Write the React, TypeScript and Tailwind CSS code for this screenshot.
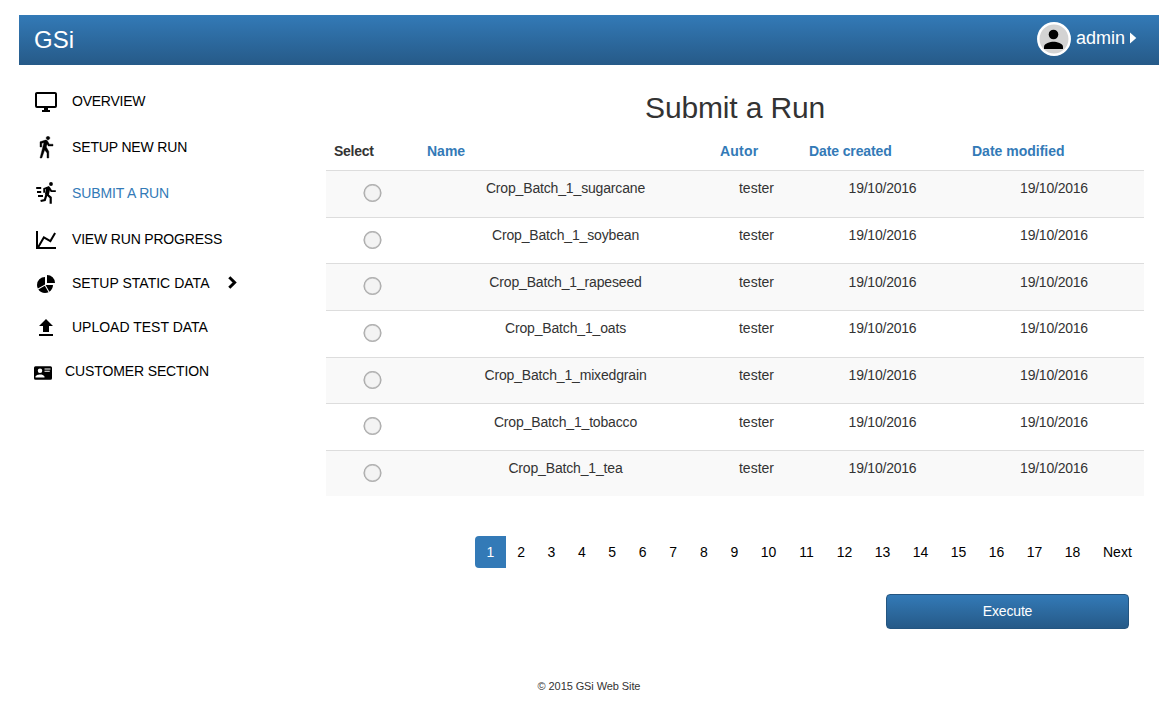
import type { ReactNode } from "react";

const menu: { label: string; icon: ReactNode; row: string; text: string; arrow?: boolean; card?: boolean }[] = [
  { label: "OVERVIEW", row: "h-[46px]", text: "tracking-[-0.25px]", icon: <path d="M21,16H3V4H21M21,2H3C1.89,2 1,2.89 1,4V16A2,2 0 0,0 3,18H10V20H8V22H16V20H14V18H21A2,2 0 0,0 23,16V4C23,2.89 22.1,2 21,2Z" /> },
  { label: "SETUP NEW RUN", row: "h-[46px]", text: "tracking-[-0.15px]", icon: <path stroke="currentColor" strokeWidth="0.4" d="M14.12,10H19V8.2H15.38L13.38,4.87C13.08,4.37 12.54,4.03 11.92,4.03C11.74,4.03 11.58,4.06 11.42,4.11L6,5.8V11H7.8V7.33L9.91,6.67L6,22H7.8L10.67,13.89L13,17V22H14.8V15.59L12.31,11.05L13.04,8.18M14,3.8C15,3.8 15.8,3 15.8,2C15.8,1 15,0.2 14,0.2C13,0.2 12.2,1 12.2,2C12.2,3 13,3.8 14,3.8Z" /> },
  {
    label: "SUBMIT A RUN", row: "h-[46px]", text: "tracking-[-0.12px] text-[#337ab7]",
    icon: (
      <g fill="none" stroke="currentColor" strokeWidth="1.9">
        <circle cx="17" cy="2" r="1.9" fill="currentColor" stroke="none" />
        <path d="M2.2 6H7.2M3 10H7.2M4 14H9" />
        <path d="M10.2 10.8V6.8L14.6 5.1L17.3 9.1H21.8" />
        <path d="M14.4 5.4L12.8 13" strokeWidth="4" />
        <path d="M12.6 12L16.7 15.6V21.8M12.5 12.5L10.8 18L6.6 19" strokeWidth="2.2" />
      </g>
    ),
  },
  { label: "VIEW RUN PROGRESS", row: "h-[44px]", text: "tracking-[-0.18px]", icon: <path d="M16,11.78L20.24,4.45L21.97,5.45L16.74,14.5L10.23,10.75L5.46,19H22V21H2V3H4V17.54L9.5,8L16,11.78Z" /> },
  { label: "SETUP STATIC DATA", row: "h-[44px]", text: "tracking-[0.02px]", arrow: true, icon: <path d="M21,11H13V3A8,8 0 0,1 21,11M19,13C19,15.78 17.58,18.23 15.43,19.67L11.58,13H19M11,21C8.22,21 5.77,19.58 4.33,17.43L10.82,13.68L14.56,20.17C13.5,20.7 12.28,21 11,21M3,13A8,8 0 0,1 11,5V12.42L3.83,16.56C3.3,15.5 3,14.28 3,13Z" /> },
  { label: "UPLOAD TEST DATA", row: "h-[44px]", text: "tracking-normal", icon: <path d="M9,16V10H5L12,3L19,10H15V16H9M5,20V18H19V20H5Z" /> },
  { label: "CUSTOMER SECTION", row: "h-[44px]", text: "tracking-[-0.12px]", card: true, icon: <path fillRule="evenodd" d="M2,3H22A2,2 0 0,1 24,5V19A2,2 0 0,1 22,21H2A2,2 0 0,1 0,19V5A2,2 0 0,1 2,3M14,6V7.3H22V6H14M14,9V10.3H21V9H14M8,13.9C6,13.9 2,15 2,17V18H14V17C14,15 10,13.9 8,13.9M8,6A3,3 0 0,0 5,9A3,3 0 0,0 8,12A3,3 0 0,0 11,9A3,3 0 0,0 8,6Z" /> },
];

const crops = [
  { name: "sugarcane", row: "h-[47px]", pad: "pt-[7px]" },
  { name: "soybean", row: "h-[46px]", pad: "pt-[7px]" },
  { name: "rapeseed", row: "h-[47px]", pad: "pt-[8px]" },
  { name: "oats", row: "h-[47px]", pad: "pt-[7px]" },
  { name: "mixedgrain", row: "h-[46px]", pad: "pt-[7px]" },
  { name: "tobacco", row: "h-[47px]", pad: "pt-[8px]" },
  { name: "tea", row: "h-[46px]", pad: "pt-[7px]" },
];
const pages = Array.from({ length: 17 }, (_, i) => i + 2);

function pageClass(p: number) {
  if (p < 8) return "w-[30.4px] pt-[6px] text-center";
  if (p < 10) return "w-[30.4px] pl-px pt-[6px] text-center";
  return "w-[38px] pl-px pt-[6px] text-center";
}

export default function App() {
  return (
    <div className="h-[701px] w-[1169px] overflow-hidden bg-white pl-[19px] pr-[10px] pt-[15px] font-['Liberation_Sans',Arial,sans-serif] text-sm leading-5 text-[#333]">
      <header className="flex h-[50px] items-start justify-between bg-linear-to-b from-[#337ab7] to-[#265a88] pl-[15px] pr-[22px] text-white">
        <span className="pt-[11px] text-[24px] leading-7">GSi</span>
        <div className="flex items-start pt-[7px]">
          <svg className="mr-[5px] size-[34px]" viewBox="0 0 34 34">
            <circle cx="17" cy="17" r="15.7" fill="#d3d3d3" stroke="#fff" strokeWidth="2.5" />
            <circle cx="16.5" cy="12.5" r="4.8" fill="#000" />
            <path d="M7 27v-2.2c0-3.3 6.3-5 9.5-5s9.5 1.7 9.5 5V27z" fill="#000" />
          </svg>
          <span className="pt-[5px] text-[18px] leading-[22px]">admin</span>
          <svg className="ml-[5px] mt-[10px] h-[12px] w-[7px]" viewBox="0 0 7 12"><path d="M0 0.5l6.3 5.5L0 11.5z" fill="#fff" /></svg>
        </div>
      </header>
      <div className="flex h-[592px]">
        <nav className="w-[307px] pl-[15px] pt-[25px] text-black">
          {menu.map((m) => (
            <div key={m.label} className={`flex items-start ${m.row}`}>
              <svg className={m.card ? "mr-[13px] mt-[4px] size-[18px]" : "mr-[14px] size-6"} viewBox="0 0 24 24" fill="currentColor">{m.icon}</svg>
              <span className={`pt-px ${m.text}`}>{m.label}</span>
              {m.arrow && <svg className="ml-[18px] mt-[4px] h-[13px] w-[9px]" viewBox="0 0 9 13"><path d="M1.3 1.3l5.3 5.2-5.3 5.2" fill="none" stroke="#000" strokeWidth="3" /></svg>}
            </div>
          ))}
        </nav>
        <main className="w-[818px]">
          <h1 className="pt-[26px] text-center text-[30px] leading-[33px] tracking-[-0.15px]">Submit a Run</h1>
          <table className="mt-[7px] w-full table-fixed border-separate border-spacing-0">
            <colgroup><col className="w-[93px]" /><col className="w-[293px]" /><col className="w-[89px]" /><col className="w-[163px]" /><col className="w-[180px]" /></colgroup>
            <thead>
              <tr className="h-[39px] text-left text-[#337ab7]">
                <th className="px-2 pt-px tracking-[-0.25px] text-[#333]">Select</th>
                <th className="px-2 pt-px">Name</th>
                <th className="px-2 pt-px tracking-[0.2px]">Autor</th>
                <th className="px-2 pt-px tracking-[-0.12px]">Date created</th>
                <th className="px-2 pt-px">Date modified</th>
              </tr>
            </thead>
            <tbody>
              {crops.map((c) => (
                <tr key={c.name} className={`text-center align-top odd:bg-[#f9f9f9] ${c.row}`}>
                  <td className="border-t border-[#ddd] pt-[13px]">
                    <svg className="mx-auto size-[19px]" viewBox="0 0 19 19">
                      <circle cx="9.5" cy="9" r="8.2" fill="#f3f3f3" stroke="#ccc" strokeWidth="1.8" />
                      <circle cx="9.5" cy="9" r="8.4" fill="none" stroke="#a6a6a6" strokeWidth="0.9" />
                    </svg>
                  </td>
                  <td className={`border-t border-[#ddd] tracking-[-0.16px] ${c.pad}`}>Crop_Batch_1_{c.name}</td>
                  <td className={`border-t border-[#ddd] ${c.pad}`}>tester</td>
                  <td className={`border-t border-[#ddd] tracking-[-0.22px] ${c.pad}`}>19/10/2016</td>
                  <td className={`border-t border-[#ddd] tracking-[-0.22px] ${c.pad}`}>19/10/2016</td>
                </tr>
              ))}
            </tbody>
          </table>
          <div className="mt-[40px] flex h-8 justify-end text-black">
            <span className="w-[31px] rounded-l bg-[#337ab7] pt-[6px] text-center text-white">1</span>
            {pages.map((p) => <span key={p} className={pageClass(p)}>{p}</span>)}
            <span className="w-[53px] pl-3 pt-[6px]">Next</span>
          </div>
          <div className="mr-[15px] mt-[26px] flex justify-end">
            <button className="h-[35px] w-[243px] rounded border border-[#245580] bg-linear-to-b from-[#337ab7] to-[#265a88] pb-[2px] tracking-[-0.15px] text-white">Execute</button>
          </div>
        </main>
      </div>
      <footer className="pt-[21px] text-center text-[11px] leading-4 tracking-[-0.09px]">© 2015 GSi Web Site</footer>
    </div>
  );
}
